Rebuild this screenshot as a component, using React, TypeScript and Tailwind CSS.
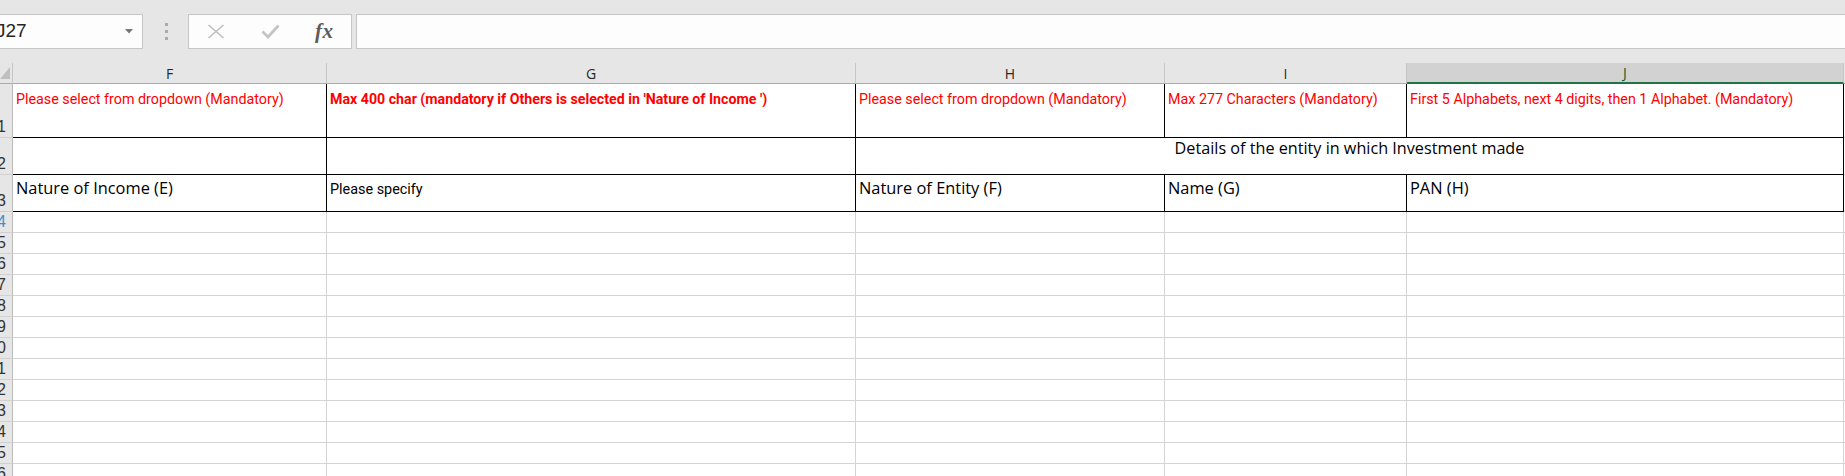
import clsx from 'clsx'

const narrow = "font-['Roboto','Liberation_Sans',sans-serif]"
const sans = "font-['Open_Sans','Noto_Sans',sans-serif]"

interface Col {
  letter: string
  w: string
}

const cols: Col[] = [
  { letter: 'F', w: 'w-[314px]' },
  { letter: 'G', w: 'w-[529px]' },
  { letter: 'H', w: 'w-[309px]' },
  { letter: 'I', w: 'w-[242px]' },
  { letter: 'J', w: 'w-[437px]' },
]

const hints = [
  { text: 'Please select from dropdown (Mandatory)', bold: false },
  { text: "Max 400 char (mandatory if Others is selected in 'Nature of Income ')", bold: true },
  { text: 'Please select from dropdown (Mandatory)', bold: false },
  { text: 'Max 277 Characters (Mandatory)', bold: false },
  { text: 'First 5 Alphabets, next 4 digits, then 1 Alphabet. (Mandatory)', bold: false },
]

const headings = [
  { text: 'Nature of Income (E)', font: sans },
  { text: 'Please specify', font: narrow },
  { text: 'Nature of Entity (F)', font: sans },
  { text: 'Name (G)', font: sans },
  { text: 'PAN (H)', font: sans },
]

function RowHead({ n, className }: { n: number; className?: string }) {
  return (
    <div
      className={clsx(
        'w-[13px] shrink-0 overflow-hidden border-r border-b border-r-[#bcbcbc] border-b-[#d0d0d0] bg-[#e6e6e6] flex items-end justify-end pr-[6px] pb-[1px]',
        className,
      )}
    >
      <span
        className={clsx(
          "whitespace-nowrap text-[16px] leading-[18px] font-['Liberation_Sans',sans-serif]",
          n === 4 ? 'text-[#3f8fd0]' : 'text-[#333]',
        )}
      >
        {n}
      </span>
    </div>
  )
}

function FormulaBar() {
  return (
    <div className="h-[63px] bg-[#e6e6e6] flex items-start pt-[14px]">
      <div className="ml-[-18px] w-[161px] h-[35px] shrink-0 bg-[#fdfdfd] border border-[#c6c6c6] flex items-center pl-[13px] pr-[9px]">
        <span className="text-[19px] text-[#262626] font-['Liberation_Sans',sans-serif] flex-1">J27</span>
        <svg width="8" height="5" viewBox="0 0 8 5">
          <path d="M0 0h8L4 4.5z" fill="#767676" />
        </svg>
      </div>
      <div className="w-[45px] h-[35px] shrink-0 flex flex-col items-center justify-center gap-[4px] pl-[1px]">
        <span className="w-[3px] h-[3px] bg-[#ababab]" />
        <span className="w-[3px] h-[3px] bg-[#ababab]" />
        <span className="w-[3px] h-[3px] bg-[#ababab]" />
      </div>
      <div className="w-[164px] h-[35px] shrink-0 bg-[#fdfdfd] border border-[#c6c6c6] flex items-center">
        <div className="w-[55px] flex justify-center">
          <svg width="18" height="15" viewBox="0 0 18 15">
            <path d="M1.5 1 16.5 14M16.5 1 1.5 14" stroke="#bdbdbd" strokeWidth="1.6" fill="none" />
          </svg>
        </div>
        <div className="w-[54px] flex justify-center">
          <svg width="19" height="15" viewBox="0 0 19 15">
            <path d="M1.5 7.5 7 13 17.5 1.5" stroke="#c4c4c4" strokeWidth="2.8" fill="none" />
          </svg>
        </div>
        <div className="w-[54px] flex justify-center">
          <span className="text-[21px] italic font-semibold text-[#5c5c5c] font-['Liberation_Serif',serif] tracking-[0.5px] leading-none">
            fx
          </span>
        </div>
      </div>
      <div className="ml-[4px] flex-1 h-[35px] bg-[#fdfdfd] border border-r-0 border-[#c6c6c6]" />
    </div>
  )
}

function ColumnHeader() {
  return (
    <div className="flex h-[21px]">
      <div className="w-[13px] shrink-0 border-r border-b border-r-[#c6c6c6] border-b-[#ababab] bg-[#e6e6e6] flex items-end justify-start pb-[4px]">
        <svg width="11" height="12" viewBox="0 0 11 12">
          <path d="M10 0v12H0z" fill="#bfbfbf" />
        </svg>
      </div>
      {cols.map((c) => (
        <div
          key={c.letter}
          className={clsx(
            c.w,
            "shrink-0 border-r border-r-[#c6c6c6] flex items-center justify-center text-[14px] font-['Open_Sans',sans-serif]",
            c.letter === 'J'
              ? 'bg-[#d2d2d2] border-b-2 border-b-[#217346] text-[#0f5a2e]'
              : 'bg-[#e6e6e6] border-b border-b-[#ababab] text-[#262626]',
          )}
        >
          {c.letter}
        </div>
      ))}
      <div className="flex-1 bg-[#e6e6e6] border-b border-b-[#ababab]" />
    </div>
  )
}

export default function App() {
  const emptyRows = [4, 5, 6, 7, 8, 9, 10, 11, 12, 13, 14, 15, 16]
  return (
    <div className="w-[1845px] h-[476px] overflow-hidden bg-white">
      <FormulaBar />
      <ColumnHeader />

      {/* row 1: red input hints */}
      <div className="flex h-[54px]">
        <RowHead n={1} />
        {cols.map((c, i) => (
          <div
            key={c.letter}
            className={clsx(c.w, 'shrink-0 border-r border-b border-black pl-[3px] pt-[2px] overflow-hidden')}
          >
            <span
              className={clsx(
                'whitespace-nowrap text-[#ff0000] leading-[18px]',
                narrow,
                hints[i].bold ? 'font-bold text-[14.2px]' : 'text-[14.3px]',
              )}
            >
              {hints[i].text}
            </span>
          </div>
        ))}
        <div className="flex-1 border-b border-[#d4d4d4]" />
      </div>

      {/* row 2: merged group title */}
      <div className="flex h-[37px]">
        <RowHead n={2} />
        <div className="w-[314px] shrink-0 border-r border-b border-black" />
        <div className="w-[529px] shrink-0 border-r border-b border-black" />
        <div className="w-[988px] shrink-0 border-r border-b border-black flex items-start justify-center pt-0">
          <span className={clsx('text-[16.2px] leading-[20px] text-black', sans)}>
            Details of the entity in which Investment made
          </span>
        </div>
        <div className="flex-1 border-b border-[#d4d4d4]" />
      </div>

      {/* row 3: column headings */}
      <div className="flex h-[37px]">
        <RowHead n={3} />
        {cols.map((c, i) => (
          <div key={c.letter} className={clsx(c.w, 'shrink-0 border-r border-b border-black pl-[3px] pt-[1px]')}>
            <span
              className={clsx(
                'whitespace-nowrap text-black leading-[18px]',
                headings[i].font,
                headings[i].font === sans ? 'text-[16.4px]' : 'text-[14.4px]',
              )}
            >
              {headings[i].text}
            </span>
          </div>
        ))}
        <div className="flex-1 border-b border-[#d4d4d4]" />
      </div>

      {emptyRows.map((n) => (
        <div key={n} className="flex h-[21px]">
          <RowHead n={n} />
          {cols.map((c) => (
            <div key={c.letter} className={clsx(c.w, 'shrink-0 border-r border-b border-[#d4d4d4]')} />
          ))}
          <div className="flex-1 border-b border-[#d4d4d4]" />
        </div>
      ))}
    </div>
  )
}
